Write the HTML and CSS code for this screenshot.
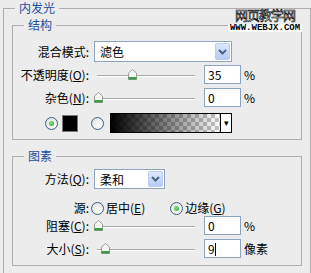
FILE: index.html
```html
<!DOCTYPE html>
<html lang="zh-CN">

<head>
	<meta charset="UTF-8" />
	<meta name="viewport" content="width=device-width, initial-scale=1.0" />
	<title>内发光</title>
	<link rel="stylesheet" href="styles.css">
</head>

<body>
	<fieldset class="outer">
		<legend>内发光</legend>

		<fieldset class="group g1">
			<legend>结构</legend>
			<div class="row r1">
				<span class="lbl">混合模式:</span>
				<div class="select wide"><span>滤色</span><i class="drop"><svg width="9" height="6" viewBox="0 0 9 6"><path d="M1 1 L4.5 4.5 L8 1" fill="none" stroke="#4d6185" stroke-width="2"/></svg></i></div>
			</div>
			<div class="row r2">
				<span class="lbl">不透明度(<u>O</u>):</span>
				<div class="slider"><b class="track"></b><i class="thumb" style="left:34px"></i></div>
				<div class="num">35</div>
				<span class="unit">%</span>
			</div>
			<div class="row r3">
				<span class="lbl">杂色(<u>N</u>):</span>
				<div class="slider"><b class="track"></b><i class="thumb" style="left:0px"></i></div>
				<div class="num">0</div>
				<span class="unit">%</span>
			</div>
			<div class="row r4">
				<i class="radio on"></i>
				<div class="swatch"></div>
				<i class="radio"></i>
				<div class="grad"><span class="ramp"></span><span class="arrow">&#9662;</span></div>
			</div>
		</fieldset>

		<fieldset class="group g2">
			<legend>图素</legend>
			<div class="row r5">
				<span class="lbl">方法(<u>Q</u>):</span>
				<div class="select small"><span>柔和</span><i class="drop"><svg width="9" height="6" viewBox="0 0 9 6"><path d="M1 1 L4.5 4.5 L8 1" fill="none" stroke="#4d6185" stroke-width="2"/></svg></i></div>
			</div>
			<div class="row r6">
				<span class="lbl">源:</span>
				<i class="radio"></i>
				<span class="opt">居中(<u>E</u>)</span>
				<i class="radio on"></i>
				<span class="opt">边缘(<u>G</u>)</span>
			</div>
			<div class="row r7">
				<span class="lbl">阻塞(<u>C</u>):</span>
				<div class="slider"><b class="track"></b><i class="thumb" style="left:0px"></i></div>
				<div class="num">0</div>
				<span class="unit">%</span>
			</div>
			<div class="row r8">
				<span class="lbl">大小(<u>S</u>):</span>
				<div class="slider"><b class="track"></b><i class="thumb" style="left:7px"></i></div>
				<div class="num">9<span class="caret"></span></div>
				<span class="unit">像素</span>
			</div>
		</fieldset>
	</fieldset>

	<div class="mark">
		<div class="mark-cn">网页教学网</div>
		<div class="mark-url">WWW.WEBJX.COM</div>
	</div>
</body>

</html>
```

FILE: styles.css
```css
* {
	box-sizing: border-box;
}

html,
body {
	margin: 0;
	padding: 0;
	overflow: hidden;
}

body {
	position: relative;
	height: 273px;
	padding-top: 1px;
	background-color: #ececec;
	font-family: "Noto Sans CJK SC", "Liberation Sans", sans-serif;
	font-size: 12px;
	color: #000;
}

u {
	text-decoration: underline;
	text-underline-offset: 1px;
}

fieldset {
	margin: 0;
	min-width: 0;
	border: 1px solid #aeaeae;
}

legend {
	padding: 0 4px;
	line-height: 14px;
	color: #1e4f9e;
}

.outer {
	width: 308px;
	margin-left: 3px;
	padding: 0 0 10px 8px;
}

.outer > legend {
	margin-left: 3px;
}

.group {
	width: 290px;
	padding: 0 0 6px 0;
}

.group > legend {
	margin-left: 11px;
}

.g1 {
	margin-top: 3px;
}

.g2 {
	margin-top: 9px;
	padding-bottom: 7px;
}

.row {
	display: flex;
	align-items: center;
}

.lbl {
	width: 76px;
	text-align: right;
	white-space: nowrap;
	line-height: 14px;
}

.r1 { margin-top: 9px; height: 21px; }
.r2 { margin-top: 3px; height: 19px; }
.r3 { margin-top: 4px; height: 19px; }
.r4 { margin-top: 6px; height: 20px; padding-left: 32px; }
.r5 { margin-top: 6px; height: 20px; }
.r6 { margin-top: 12px; height: 14px; }
.r7 { margin-top: 1px; height: 19px; }
.r8 { margin-top: 4px; height: 19px; }

/* dropdowns */
.select {
	margin-left: 5px;
	height: 21px;
	display: flex;
	align-items: center;
	justify-content: space-between;
	background-color: #fff;
	border: 1px solid #8ca4c0;
	padding: 1px 1px 1px 5px;
}

.select.wide {
	width: 138px;
}

.select.small {
	width: 71px;
	height: 20px;
}

.drop {
	width: 15px;
	height: 100%;
	display: flex;
	align-items: center;
	justify-content: center;
	background: linear-gradient(#dde7fd, #b7cbf7);
	border: 1px solid #bccdf2;
	border-radius: 2px;
}

/* sliders */
.slider {
	position: relative;
	width: 101px;
	height: 19px;
	margin-left: 5px;
}

.track {
	position: absolute;
	left: 3px;
	right: 0;
	top: 10px;
	height: 2px;
	border-top: 1px solid #a9a9a9;
	border-bottom: 1px solid #fff;
}

.thumb {
	position: absolute;
	top: 4px;
	width: 9px;
	height: 11px;
	background: url("data:image/svg+xml,%3Csvg xmlns='http://www.w3.org/2000/svg' width='9' height='11'%3E%3Cpath d='M0.5 4 L4.5 0.5 L8.5 4 L8.5 10.5 L0.5 10.5 Z' fill='%23f2f5f0' stroke='%23999f96'/%3E%3Crect x='0.5' y='8' width='8' height='2.5' fill='%233d9b4a'/%3E%3C/svg%3E") no-repeat;
}

.num {
	width: 37px;
	height: 19px;
	margin-left: 9px;
	padding-left: 3px;
	line-height: 17px;
	background-color: #fff;
	border: 1px solid #8ca4c0;
}

.caret {
	display: inline-block;
	width: 1px;
	height: 13px;
	vertical-align: -2px;
	background-color: #000;
}

.unit {
	margin-left: 3px;
}

/* radios */
.radio {
	position: relative;
	width: 13px;
	height: 13px;
	border-radius: 50%;
	border: 1px solid #3c5f8a;
	background: radial-gradient(circle at 65% 65%, #fff, #dcdcd4);
	flex: none;
}

.radio.on::after {
	content: "";
	position: absolute;
	left: 3px;
	top: 3px;
	width: 5px;
	height: 5px;
	border-radius: 50%;
	background: radial-gradient(circle at 40% 40%, #8fe08f, #21a121);
}

.r6 .radio {
	margin-left: 2px;
}

.opt {
	margin-left: 2px;
	line-height: 14px;
}

.r6 .opt:nth-of-type(2) {
	margin-right: 23px;
}

.swatch {
	width: 16px;
	height: 17px;
	margin: 0 13px 0 4px;
	background-color: #000;
	border: 1px solid #777;
}

.grad {
	display: flex;
	width: 122px;
	height: 20px;
	margin-left: 6px;
	border: 1px solid #000;
}

.ramp {
	flex: 1;
	background:
		linear-gradient(to right, #000, rgba(0, 0, 0, 0)),
		repeating-conic-gradient(#c4c4c4 0 25%, #fff 0 50%) 0 0 / 8px 8px;
}

.arrow {
	width: 11px;
	border-left: 1px solid #000;
	background-color: #fff;
	font-size: 9px;
	line-height: 18px;
	text-align: center;
}

/* watermark laid over the frame */
.mark {
	position: absolute;
	left: 228px;
	top: 8px;
	width: 74px;
	text-align: center;
}

.mark-cn {
	font-size: 13px;
	line-height: 14px;
	color: #fff;
	-webkit-text-stroke: 0.6px #000;
	letter-spacing: -1px;
}

.mark-url {
	margin-top: 2px;
	background-color: #fff;
	font-family: "Liberation Mono", monospace;
	font-size: 9px;
	font-weight: bold;
	line-height: 8px;
	letter-spacing: 0;
}
```
